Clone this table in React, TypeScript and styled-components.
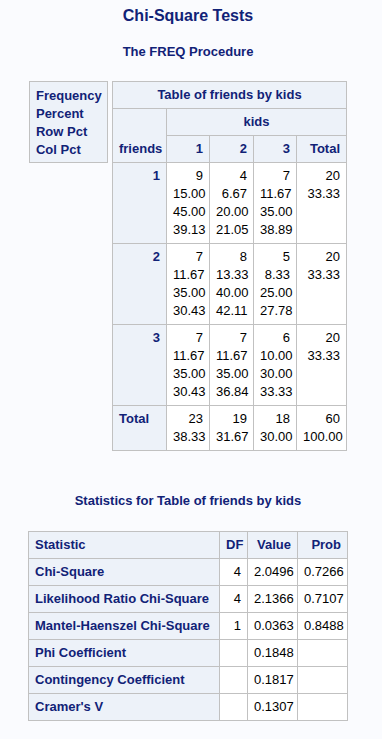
import { createGlobalStyle, styled } from 'styled-components'

const GlobalStyle = createGlobalStyle`
  html, body {
    margin: 0;
    padding: 0;
    background: #fafbfe;
  }
  body {
    font-family: "Liberation Sans", Arial, sans-serif;
    font-size: 13px;
    color: #000;
  }
`;

const Page = styled.div`
  width: 376px;
  display: flex;
  flex-direction: column;
  align-items: center;
  padding-top: 7px;
`;

const SystemTitle = styled.h1`
  margin: 0;
  font-size: 16px;
  line-height: 18px;
  font-weight: bold;
  color: #112277;
`;

const ProcTitle = styled.h2`
  margin: 18px 0 0;
  font-size: 13px;
  line-height: 18px;
  font-weight: bold;
  color: #112277;
`;

const CrossTabArea = styled.div`
  margin-top: 20px;
  display: flex;
  align-items: flex-start;
  gap: 4px;
`;

const Legend = styled.div`
  box-sizing: border-box;
  width: 79px;
  height: 82px;
  padding: 5px 6px 0;
  border: 1px solid #c1c1c1;
  background: #edf2f9;
  color: #112277;
  font-weight: bold;
  line-height: 18px;
  white-space: nowrap;
`;

const Grid = styled.table<{ $width: number }>`
  border-collapse: collapse;
  table-layout: fixed;
  width: ${p => p.$width}px;
  background: #fff;
  font-size: 13px;
  line-height: 18px;
`;

const Head = styled.th<{ $align?: string; $valign?: string }>`
  padding: 4px 6px;
  border: 1px solid #c1c1c1;
  background: #edf2f9;
  color: #112277;
  font-weight: bold;
  text-align: ${p => p.$align || 'left'};
  vertical-align: ${p => p.$valign || 'top'};
  white-space: nowrap;
`;

const Cell = styled.td`
  padding: 4px 6px;
  border: 1px solid #c1c1c1;
  background: #fff;
  text-align: right;
  vertical-align: top;
  white-space: nowrap;
`;

const StatsTitle = styled.h3`
  margin: 41px 0 0;
  font-size: 13px;
  line-height: 18px;
  font-weight: bold;
  color: #112277;
`;

const StatsArea = styled.div`
  margin-top: 21px;
`;

const rows = [
  { label: '1', cells: [['9', '15.00', '45.00', '39.13'], ['4', '6.67', '20.00', '21.05'], ['7', '11.67', '35.00', '38.89'], ['20', '33.33']] },
  { label: '2', cells: [['7', '11.67', '35.00', '30.43'], ['8', '13.33', '40.00', '42.11'], ['5', '8.33', '25.00', '27.78'], ['20', '33.33']] },
  { label: '3', cells: [['7', '11.67', '35.00', '30.43'], ['7', '11.67', '35.00', '36.84'], ['6', '10.00', '30.00', '33.33'], ['20', '33.33']] },
];

const totals = [['23', '38.33'], ['19', '31.67'], ['18', '30.00'], ['60', '100.00']];

const stats = [
  { name: 'Chi-Square', df: '4', value: '2.0496', prob: '0.7266' },
  { name: 'Likelihood Ratio Chi-Square', df: '4', value: '2.1366', prob: '0.7107' },
  { name: 'Mantel-Haenszel Chi-Square', df: '1', value: '0.0363', prob: '0.8488' },
  { name: 'Phi Coefficient', df: '', value: '0.1848', prob: '' },
  { name: 'Contingency Coefficient', df: '', value: '0.1817', prob: '' },
  { name: "Cramer's V", df: '', value: '0.1307', prob: '' },
];

function Lines({ items }: { items: string[] }) {
  return (
    <>
      {items.map((t, i) => (
        <div key={i}>{t}</div>
      ))}
    </>
  );
}

export default function App() {
  return (
    <>
      <GlobalStyle />
      <Page>
        <SystemTitle>Chi-Square Tests</SystemTitle>
        <ProcTitle>The FREQ Procedure</ProcTitle>

        <CrossTabArea>
          <Legend>
            <div>Frequency</div>
            <div>Percent</div>
            <div>Row Pct</div>
            <div>Col Pct</div>
          </Legend>
          <Grid $width={234}>
            <colgroup>
              <col style={{ width: 54 }} />
              <col style={{ width: 43 }} />
              <col style={{ width: 44 }} />
              <col style={{ width: 43 }} />
              <col style={{ width: 50 }} />
            </colgroup>
            <thead>
              <tr>
                <Head colSpan={5} $align="center">Table of friends by kids</Head>
              </tr>
              <tr>
                <Head rowSpan={2} $valign="bottom">friends</Head>
                <Head colSpan={4} $align="center">kids</Head>
              </tr>
              <tr>
                <Head $align="right">1</Head>
                <Head $align="right">2</Head>
                <Head $align="right">3</Head>
                <Head $align="right">Total</Head>
              </tr>
            </thead>
            <tbody>
              {rows.map(r => (
                <tr key={r.label}>
                  <Head $align="right">{r.label}</Head>
                  {r.cells.map((c, i) => (
                    <Cell key={i}><Lines items={c} /></Cell>
                  ))}
                </tr>
              ))}
              <tr>
                <Head>Total</Head>
                {totals.map((c, i) => (
                  <Cell key={i}><Lines items={c} /></Cell>
                ))}
              </tr>
            </tbody>
          </Grid>
        </CrossTabArea>

        <StatsTitle>Statistics for Table of friends by kids</StatsTitle>
        <StatsArea>
          <Grid $width={319}>
            <colgroup>
              <col style={{ width: 191 }} />
              <col style={{ width: 28 }} />
              <col style={{ width: 50 }} />
              <col style={{ width: 50 }} />
            </colgroup>
            <thead>
              <tr>
                <Head>Statistic</Head>
                <Head $align="right">DF</Head>
                <Head $align="right">Value</Head>
                <Head $align="right">Prob</Head>
              </tr>
            </thead>
            <tbody>
              {stats.map(s => (
                <tr key={s.name}>
                  <Head>{s.name}</Head>
                  <Cell>{s.df}</Cell>
                  <Cell>{s.value}</Cell>
                  <Cell>{s.prob}</Cell>
                </tr>
              ))}
            </tbody>
          </Grid>
        </StatsArea>
      </Page>
    </>
  );
}
